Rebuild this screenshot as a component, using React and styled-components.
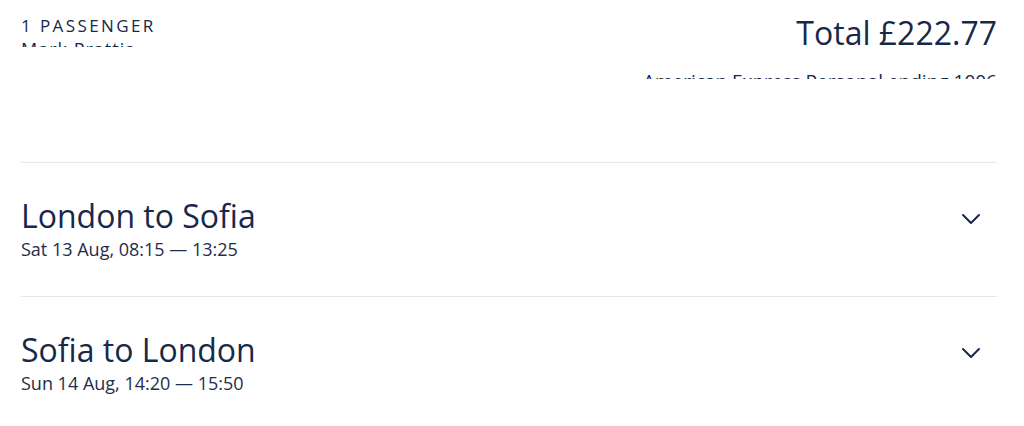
import React from 'react'
import styled, { createGlobalStyle } from 'styled-components'

const GlobalStyle = createGlobalStyle`
    html, body {
        margin: 0;
        padding: 0;
        background: #ffffff;
    }
    body {
        font-family: "Open Sans", "Liberation Sans", sans-serif;
        color: #18284a;
    }
`

const trips = [
    { title: 'London to Sofia', when: 'Sat 13 Aug, 08:15 — 13:25' },
    { title: 'Sofia to London', when: 'Sun 14 Aug, 14:20 — 15:50' },
]

function Chevron() {
    return (
        <svg width="20" height="12" viewBox="0 0 20 12" fill="none">
            <path d="M2 2 L10 10 L18 2" stroke="#18284a" strokeWidth="2" strokeLinecap="round" strokeLinejoin="round" />
        </svg>
    )
}

function App() {
    return (
        <Page>
            <GlobalStyle />
            <Summary>
                <Passengers>
                    <Label>1 Passenger</Label>
                    <Name>Mark Prattis</Name>
                </Passengers>
                <Payment>
                    <Total>Total £222.77</Total>
                    <Card>American Express Personal ending 1006</Card>
                </Payment>
            </Summary>
            {trips.map((trip, index) => (
                <Leg key={index}>
                    <LegText>
                        <LegTitle>{trip.title}</LegTitle>
                        <LegTime>{trip.when}</LegTime>
                    </LegText>
                    <Toggle>
                        <Chevron />
                    </Toggle>
                </Leg>
            ))}
        </Page>
    )
}

export default App

const Page = styled.div`
    padding: 0 27px 0 21px;
`

const Summary = styled.div`
    height: 162px;
    box-sizing: border-box;
    padding-top: 11px;
    display: flex;
    justify-content: space-between;
    align-items: flex-start;
`

const Passengers = styled.div`
    margin-top: 3px;
    height: 33px;
    overflow: hidden;
`

const Label = styled.div`
    font-size: 17px;
    text-transform: uppercase;
    letter-spacing: 2.4px;
`

const Name = styled.div`
    font-size: 18px;
    letter-spacing: 1px;
`

const Payment = styled.div`
    height: 68px;
    overflow: hidden;
    text-align: right;
`

const Total = styled.div`
    font-size: 32px;
`

const Card = styled.div`
    margin-top: 14px;
    font-size: 19px;
`

const Leg = styled.div`
    border-top: 1px solid #e6e7ea;
    padding: 31px 0 35px;
    display: flex;
    align-items: center;
    justify-content: space-between;
`

const LegText = styled.div`
    display: flex;
    flex-direction: column;
`

const LegTitle = styled.div`
    font-size: 32px;
`

const LegTime = styled.div`
    font-size: 18px;
    color: #1f2d4c;
`

const Toggle = styled.div`
    width: 20px;
    height: 12px;
    margin-right: 16px;
    margin-bottom: 18px;
    display: flex;
`
